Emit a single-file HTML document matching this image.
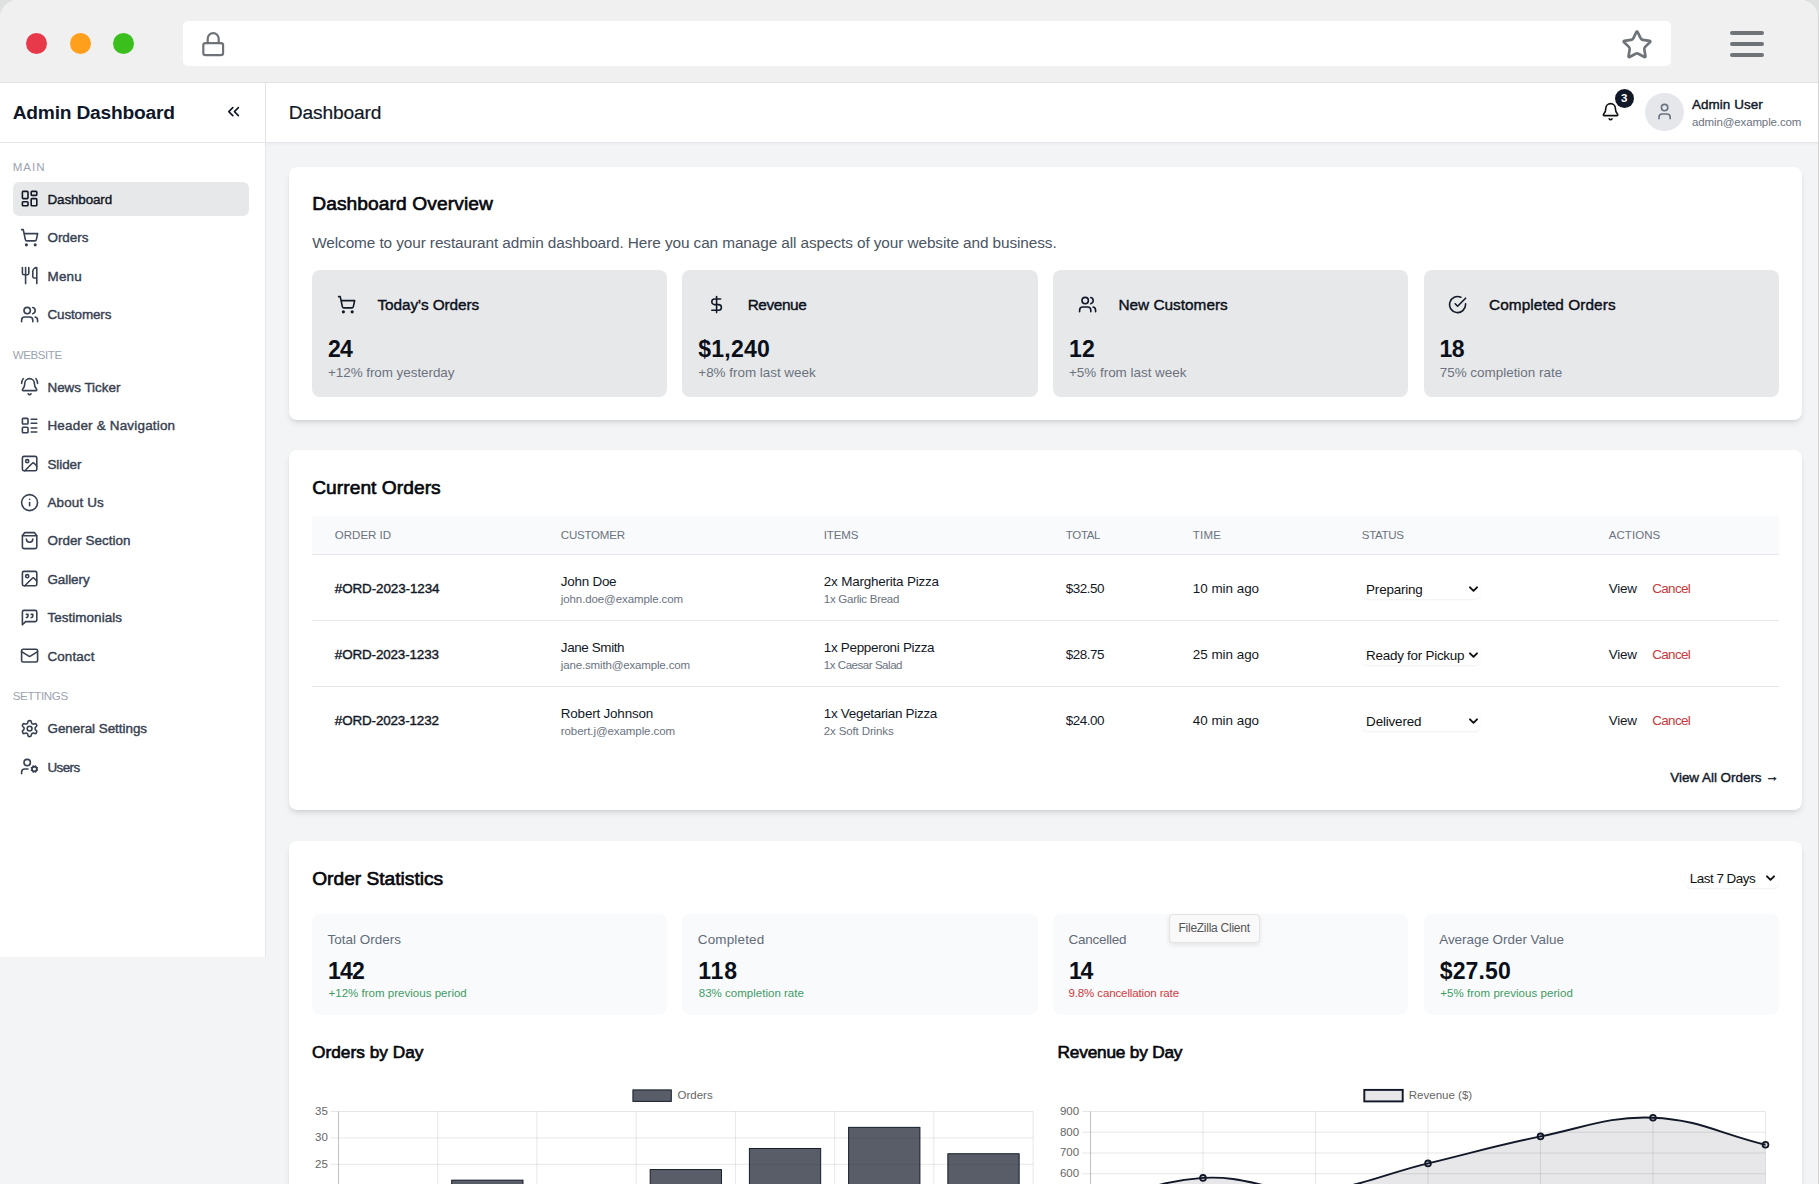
<!DOCTYPE html>
<html lang="en"><head><meta charset="utf-8"><title>Admin Dashboard</title>
<style>
*{box-sizing:border-box;margin:0;padding:0}
html,body{width:1819px;height:1184px;overflow:hidden}
body{position:relative;background:#dfe0e0;font-family:"Liberation Sans",sans-serif;color:#111827;-webkit-font-smoothing:antialiased}
.abs{position:absolute}
svg.ic{display:block;flex:none}
.sb{-webkit-text-stroke:.4px currentColor}
.card h2 .sb,.card h3 .sb{-webkit-text-stroke:.65px currentColor}
.item span{position:relative;top:.5px}
.page{position:absolute;left:0;top:0;width:1818px;height:1184px;background:#f3f4f6;border-radius:18px 18px 0 0;overflow:hidden}
.edge{position:absolute;left:1818px;top:14px;width:1px;height:1170px;background:#d4d4d4}
/* browser chrome */
.chrome{position:absolute;left:0;top:0;width:1818px;height:83px;background:#f0f0f0;border-bottom:1px solid #e1e1e1}
.dot{position:absolute;top:32.5px;width:21px;height:21px;border-radius:50%}
.url{position:absolute;left:183px;top:21px;width:1488px;height:45px;background:#fff;border-radius:5px}
.chrome .ic{position:absolute;color:#6e7377}
.hb{position:absolute;left:1730.2px;width:33.8px;height:4.2px;border-radius:2.1px;background:#6e7377}
/* sidebar */
.sidebar{position:absolute;left:0;top:83px;width:266px;height:873.5px;background:#fff;border-right:1px solid #e5e7eb}
.sbhead{position:relative;height:60.4px;border-bottom:1px solid #e5e7eb}
.brand{position:absolute;left:12.7px;top:15.7px;font-size:19.2px;line-height:27px;font-weight:700;color:#0f172a;white-space:nowrap}
.collapse{position:absolute;left:224.4px;top:19.3px;color:#111827}
nav{padding:15.5px 16px 0 12.7px}
.lab{position:relative;top:.8px;font-size:11.52px;line-height:15.36px;color:#9ca3af;text-transform:uppercase;white-space:nowrap;margin:15.5px 0 7.5px}
.lab.first{margin-top:0}
.item{display:flex;align-items:center;height:34.56px;margin-bottom:3.84px;padding-left:7.3px;border-radius:6px;color:#374151;font-size:13.44px;line-height:19.2px;white-space:nowrap;width:236.3px}
.item .ic{margin-right:8.3px}
.item.active{background:#e7e8e9;color:#111827}
/* header */
.top{position:absolute;left:266px;top:83px;width:1560px;height:60.4px;background:#fff;border-bottom:1px solid #e5e7eb;box-shadow:0 1px 2px rgba(0,0,0,.05)}
.top h1{position:absolute;left:22.8px;top:15.5px;font-size:19.2px;line-height:27px;font-weight:400;color:#111827;white-space:nowrap;-webkit-text-stroke:.2px currentColor}
.bell{position:absolute;left:1335.3px;top:19.3px;color:#111}
.badge{position:absolute;left:1348.7px;top:5.5px;width:19.2px;height:19.2px;border-radius:50%;background:#111827;color:#fff;font-size:11.5px;line-height:19.2px;font-weight:700;text-align:center}
.avatar{position:absolute;left:1379.3px;top:9.6px;width:38.4px;height:38.4px;border-radius:50%;background:#e5e7eb;color:#6b7280;display:flex;align-items:center;justify-content:center}
.uname{position:absolute;left:1426px;top:11.6px;font-size:13.44px;line-height:19.2px;color:#111827;white-space:nowrap}
.umail{position:absolute;left:1426px;top:31.8px;font-size:11.52px;line-height:15.36px;color:#6b7280;white-space:nowrap}
/* cards */
.card{position:absolute;left:289px;width:1513px;background:#fff;border-radius:8px;box-shadow:0 4px 6px -1px rgba(0,0,0,.1),0 2px 4px -2px rgba(0,0,0,.1)}
.card h2{position:absolute;left:23.2px;font-size:19.2px;line-height:27px;font-weight:400;color:#05070d;white-space:nowrap}
.card h3{position:absolute;font-size:17.28px;line-height:27px;font-weight:400;color:#05070d;white-space:nowrap}
.t{position:absolute;white-space:nowrap}
.stat{position:absolute;width:355.3px;border-radius:8px}
.ov{top:103.5px;height:126.5px;background:#e7e8e9}
.ov .ic{position:absolute;top:25.3px;left:24.7px;color:#111827}
.ov .ttl{position:absolute;left:65.4px;top:25px;font-size:15.36px;line-height:20px;color:#0b0f19;white-space:nowrap}
.ov .num{position:absolute;left:15.9px;top:63.6px;font-size:23.04px;line-height:30.72px;font-weight:700;color:#0b0f19;white-space:nowrap}
.ov .sub{position:absolute;left:16px;top:93px;font-size:13.44px;line-height:19.2px;color:#6b7280;white-space:nowrap}
.os{top:73px;height:101px;background:#f9fafb}
.os .ttl{position:absolute;left:15.5px;top:15.5px;font-size:13.44px;line-height:19.2px;color:#626a79;white-space:nowrap}
.os .num{position:absolute;left:16px;top:41.5px;font-size:23.04px;line-height:30.72px;font-weight:700;color:#0b0f19;white-space:nowrap}
.os .sub{position:absolute;left:16.5px;top:72.3px;font-size:11.52px;line-height:15.36px;white-space:nowrap}
.green{color:#3f9a63}.red{color:#d0393e;margin-left:-1px}
/* table */
table{position:absolute;left:23px;top:65.5px;width:1467px;border-collapse:collapse;table-layout:fixed}
th{height:38.5px;background:#f9fafb;text-align:left;padding:0 0 0 22.8px;font-size:11.52px;font-weight:400;color:#6b7280;text-transform:uppercase;white-space:nowrap;border-bottom:1px solid #e5e7eb}
td{height:66px;padding:2.8px 0 0 22.8px;font-size:13.44px;line-height:19.2px;color:#111827;white-space:nowrap;vertical-align:middle;border-bottom:1px solid #e5e7eb}
tr:last-child td{border-bottom:none}
td .s{display:block;position:relative;top:1px;font-size:11.52px;line-height:15.36px;color:#6b7280;margin-top:.6px}
td .m{display:block;position:relative;top:.7px}
.sel{position:relative;display:block;background:#fff;border-radius:5px;box-shadow:0 1px 2px rgba(0,0,0,.06);font-size:13.44px;line-height:21.8px;height:19.8px;padding-left:4.3px;color:#111;white-space:nowrap}
.sel svg{position:absolute;right:2.2px;top:6.2px}
.cancel{color:#c8383d;margin-left:15.5px}
.arr{position:relative;top:-1px}
.tip{position:absolute;left:1169.3px;top:913.5px;width:91px;height:29.4px;background:#f9f9f9;border:1px solid #e4e4e4;border-radius:4px;box-shadow:0 2px 5px rgba(0,0,0,.09);font-size:12px;line-height:27.4px;color:#575757;padding-left:8.2px;white-space:nowrap}
</style></head>
<body>
<div class="page">

<div class="chrome">
  <div class="dot" style="left:26px;background:#e8394a"></div>
  <div class="dot" style="left:69.5px;background:#ff9f1c"></div>
  <div class="dot" style="left:113px;background:#3abf1d"></div>
  <div class="url"></div>
  <svg class="ic " width="26.4" height="26.4" viewBox="0 0 24 24" fill="none" stroke="currentColor" stroke-width="2" stroke-linecap="round" stroke-linejoin="round" style="left:199.8px;top:30.9px"><rect width="18" height="11" x="3" y="11" rx="2" ry="2"/><path d="M7 11V7a5 5 0 0 1 10 0v4"/></svg>
  <svg class="ic " width="32" height="32" viewBox="0 0 24 24" fill="none" stroke="currentColor" stroke-width="2" stroke-linecap="round" stroke-linejoin="round" style="left:1620.5px;top:28.7px"><path d="M11.525 2.295a.53.53 0 0 1 .95 0l2.31 4.679a2.123 2.123 0 0 0 1.595 1.16l5.166.756a.53.53 0 0 1 .294.904l-3.736 3.638a2.123 2.123 0 0 0-.611 1.878l.882 5.14a.53.53 0 0 1-.771.56l-4.618-2.428a2.122 2.122 0 0 0-1.973 0L6.396 21.01a.53.53 0 0 1-.77-.56l.881-5.139a2.122 2.122 0 0 0-.611-1.879L2.16 9.795a.53.53 0 0 1 .294-.906l5.165-.755a2.122 2.122 0 0 0 1.597-1.16z"/></svg>
  <div class="hb" style="top:30.7px"></div><div class="hb" style="top:41.7px"></div><div class="hb" style="top:52.8px"></div>
</div>

<aside class="sidebar">
  <div class="sbhead"><div class="brand"><span style="letter-spacing:-0.211px">Admin Dashboard</span></div><div class="collapse"><svg class="ic " width="19.2" height="19.2" viewBox="0 0 24 24" fill="none" stroke="currentColor" stroke-width="2" stroke-linecap="round" stroke-linejoin="round" ><path d="m11 17-5-5 5-5"/><path d="m18 17-5-5 5-5"/></svg></div></div>
  <nav>
<div class="lab first"><span style="letter-spacing:1.068px">MAIN</span></div>
<a class="item active"><svg class="ic " width="19.2" height="19.2" viewBox="0 0 24 24" fill="none" stroke="currentColor" stroke-width="2" stroke-linecap="round" stroke-linejoin="round" ><rect width="7" height="9" x="3" y="3" rx="1"/><rect width="7" height="5" x="14" y="3" rx="1"/><rect width="7" height="9" x="14" y="12" rx="1"/><rect width="7" height="5" x="3" y="16" rx="1"/></svg><span class="sb" style="letter-spacing:-0.131px">Dashboard</span></a>
<a class="item"><svg class="ic " width="19.2" height="19.2" viewBox="0 0 24 24" fill="none" stroke="currentColor" stroke-width="2" stroke-linecap="round" stroke-linejoin="round" ><circle cx="8" cy="21" r="1"/><circle cx="19" cy="21" r="1"/><path d="M2.05 2.05h2l2.66 12.42a2 2 0 0 0 2 1.58h9.78a2 2 0 0 0 1.95-1.57l1.65-7.43H5.12"/></svg><span class="sb" style="letter-spacing:-0.016px">Orders</span></a>
<a class="item"><svg class="ic " width="19.2" height="19.2" viewBox="0 0 24 24" fill="none" stroke="currentColor" stroke-width="2" stroke-linecap="round" stroke-linejoin="round" ><path d="M3 2v7c0 1.1.9 2 2 2h4a2 2 0 0 0 2-2V2"/><path d="M7 2v20"/><path d="M21 15V2a5 5 0 0 0-5 5v6c0 1.1.9 2 2 2h3Zm0 0v7"/></svg><span class="sb" style="letter-spacing:0.225px">Menu</span></a>
<a class="item"><svg class="ic " width="19.2" height="19.2" viewBox="0 0 24 24" fill="none" stroke="currentColor" stroke-width="2" stroke-linecap="round" stroke-linejoin="round" ><path d="M16 21v-2a4 4 0 0 0-4-4H6a4 4 0 0 0-4 4v2"/><circle cx="9" cy="7" r="4"/><path d="M22 21v-2a4 4 0 0 0-3-3.87"/><path d="M16 3.13a4 4 0 0 1 0 7.75"/></svg><span class="sb" style="letter-spacing:-0.134px">Customers</span></a>
<div class="lab"><span style="letter-spacing:-0.388px">WEBSITE</span></div>
<a class="item"><svg class="ic " width="19.2" height="19.2" viewBox="0 0 24 24" fill="none" stroke="currentColor" stroke-width="2" stroke-linecap="round" stroke-linejoin="round" ><path d="M10.268 21a2 2 0 0 0 3.464 0"/><path d="M22 8c0-2.3-.8-4.3-2-6"/><path d="M3.262 15.326A1 1 0 0 0 4 17h16a1 1 0 0 0 .74-1.673C19.41 13.956 18 12.499 18 8A6 6 0 0 0 6 8c0 4.499-1.411 5.956-2.738 7.326"/><path d="M4 2C2.8 3.7 2 5.7 2 8"/></svg><span class="sb" style="letter-spacing:-0.027px">News Ticker</span></a>
<a class="item"><svg class="ic " width="19.2" height="19.2" viewBox="0 0 24 24" fill="none" stroke="currentColor" stroke-width="2" stroke-linecap="round" stroke-linejoin="round" ><rect width="7" height="7" x="3" y="3" rx="1"/><rect width="7" height="7" x="3" y="14" rx="1"/><path d="M14 4h7"/><path d="M14 9h7"/><path d="M14 15h7"/><path d="M14 20h7"/></svg><span class="sb" style="letter-spacing:0.200px">Header &amp; Navigation</span></a>
<a class="item"><svg class="ic " width="19.2" height="19.2" viewBox="0 0 24 24" fill="none" stroke="currentColor" stroke-width="2" stroke-linecap="round" stroke-linejoin="round" ><rect width="18" height="18" x="3" y="3" rx="2" ry="2"/><circle cx="9" cy="9" r="2"/><path d="m21 15-3.086-3.086a2 2 0 0 0-2.828 0L6 21"/></svg><span class="sb" style="letter-spacing:-0.072px">Slider</span></a>
<a class="item"><svg class="ic " width="19.2" height="19.2" viewBox="0 0 24 24" fill="none" stroke="currentColor" stroke-width="2" stroke-linecap="round" stroke-linejoin="round" ><circle cx="12" cy="12" r="10"/><path d="M12 16v-4"/><path d="M12 8h.01"/></svg><span class="sb" style="letter-spacing:0.146px">About Us</span></a>
<a class="item"><svg class="ic " width="19.2" height="19.2" viewBox="0 0 24 24" fill="none" stroke="currentColor" stroke-width="2" stroke-linecap="round" stroke-linejoin="round" ><path d="M6 2 3 6v14a2 2 0 0 0 2 2h14a2 2 0 0 0 2-2V6l-3-4Z"/><path d="M3 6h18"/><path d="M16 10a4 4 0 0 1-8 0"/></svg><span class="sb" style="letter-spacing:0.008px">Order Section</span></a>
<a class="item"><svg class="ic " width="19.2" height="19.2" viewBox="0 0 24 24" fill="none" stroke="currentColor" stroke-width="2" stroke-linecap="round" stroke-linejoin="round" ><rect width="18" height="18" x="3" y="3" rx="2" ry="2"/><circle cx="9" cy="9" r="2"/><path d="m21 15-3.086-3.086a2 2 0 0 0-2.828 0L6 21"/></svg><span class="sb" style="letter-spacing:-0.063px">Gallery</span></a>
<a class="item"><svg class="ic " width="19.2" height="19.2" viewBox="0 0 24 24" fill="none" stroke="currentColor" stroke-width="2" stroke-linecap="round" stroke-linejoin="round" ><path d="M21 15a2 2 0 0 1-2 2H7l-4 4V5a2 2 0 0 1 2-2h14a2 2 0 0 1 2 2z"/><path d="M8 12a2 2 0 0 0 2-2V8H8"/><path d="M14 12a2 2 0 0 0 2-2V8h-2"/></svg><span class="sb" style="letter-spacing:0.051px">Testimonials</span></a>
<a class="item"><svg class="ic " width="19.2" height="19.2" viewBox="0 0 24 24" fill="none" stroke="currentColor" stroke-width="2" stroke-linecap="round" stroke-linejoin="round" ><rect width="20" height="16" x="2" y="4" rx="2"/><path d="m22 7-8.97 5.7a1.94 1.94 0 0 1-2.06 0L2 7"/></svg><span class="sb" style="letter-spacing:0.098px">Contact</span></a>
<div class="lab"><span style="letter-spacing:-0.299px">SETTINGS</span></div>
<a class="item"><svg class="ic " width="19.2" height="19.2" viewBox="0 0 24 24" fill="none" stroke="currentColor" stroke-width="2" stroke-linecap="round" stroke-linejoin="round" ><path d="M12.22 2h-.44a2 2 0 0 0-2 2v.18a2 2 0 0 1-1 1.73l-.43.25a2 2 0 0 1-2 0l-.15-.08a2 2 0 0 0-2.73.73l-.22.38a2 2 0 0 0 .73 2.73l.15.1a2 2 0 0 1 1 1.72v.51a2 2 0 0 1-1 1.74l-.15.09a2 2 0 0 0-.73 2.73l.22.38a2 2 0 0 0 2.73.73l.15-.08a2 2 0 0 1 2 0l.43.25a2 2 0 0 1 1 1.73V20a2 2 0 0 0 2 2h.44a2 2 0 0 0 2-2v-.18a2 2 0 0 1 1-1.73l.43-.25a2 2 0 0 1 2 0l.15.08a2 2 0 0 0 2.73-.73l.22-.39a2 2 0 0 0-.73-2.73l-.15-.08a2 2 0 0 1-1-1.74v-.5a2 2 0 0 1 1-1.74l.15-.09a2 2 0 0 0 .73-2.73l-.22-.38a2 2 0 0 0-2.73-.73l-.15.08a2 2 0 0 1-2 0l-.43-.25a2 2 0 0 1-1-1.73V4a2 2 0 0 0-2-2z"/><circle cx="12" cy="12" r="3"/></svg><span class="sb" style="letter-spacing:-0.033px">General Settings</span></a>
<a class="item"><svg class="ic " width="19.2" height="19.2" viewBox="0 0 24 24" fill="none" stroke="currentColor" stroke-width="2" stroke-linecap="round" stroke-linejoin="round" ><circle cx="18" cy="15" r="3"/><circle cx="9" cy="7" r="4"/><path d="M10 15H6a4 4 0 0 0-4 4v2"/><path d="m21.7 16.4-.9-.3"/><path d="m15.2 13.9-.9-.3"/><path d="m16.6 18.7.3-.9"/><path d="m19.1 12.2.3-.9"/><path d="m19.6 18.7-.4-1"/><path d="m16.8 12.3-.4-1"/><path d="m14.3 16.6 1-.4"/><path d="m20.7 13.8 1-.4"/></svg><span class="sb" style="letter-spacing:-0.598px">Users</span></a>
  </nav>
</aside>

<header class="top">
  <h1><span style="letter-spacing:-0.159px">Dashboard</span></h1>
  <div class="bell"><svg class="ic " width="19.2" height="19.2" viewBox="0 0 24 24" fill="none" stroke="currentColor" stroke-width="2" stroke-linecap="round" stroke-linejoin="round" ><path d="M10.268 21a2 2 0 0 0 3.464 0"/><path d="M3.262 15.326A1 1 0 0 0 4 17h16a1 1 0 0 0 .74-1.673C19.41 13.956 18 12.499 18 8A6 6 0 0 0 6 8c0 4.499-1.411 5.956-2.738 7.326"/></svg></div>
  <div class="badge">3</div>
  <div class="avatar"><svg class="ic " width="19.2" height="19.2" viewBox="0 0 24 24" fill="none" stroke="currentColor" stroke-width="2" stroke-linecap="round" stroke-linejoin="round" ><path d="M19 21v-2a4 4 0 0 0-4-4H9a4 4 0 0 0-4 4v2"/><circle cx="12" cy="7" r="4"/></svg></div>
  <div class="uname"><span class="sb" style="letter-spacing:0.055px">Admin User</span></div>
  <div class="umail"><span style="letter-spacing:-0.134px">admin@example.com</span></div>
</header>
<main>

<section class="card" style="top:166.5px;height:253.2px">
  <h2 style="top:23.3px"><span class="sb" style="letter-spacing:0.090px">Dashboard Overview</span></h2>
  <p class="t" style="left:23.2px;top:64.8px;font-size:15.36px;line-height:23px;color:#4b5563"><span style="letter-spacing:-0.096px">Welcome to your restaurant admin dashboard. Here you can manage all aspects of your website and business.</span></p>
<div class="stat ov" style="left:23px"><svg class="ic " width="19.2" height="19.2" viewBox="0 0 24 24" fill="none" stroke="currentColor" stroke-width="2" stroke-linecap="round" stroke-linejoin="round" ><circle cx="8" cy="21" r="1"/><circle cx="19" cy="21" r="1"/><path d="M2.05 2.05h2l2.66 12.42a2 2 0 0 0 2 1.58h9.78a2 2 0 0 0 1.95-1.57l1.65-7.43H5.12"/></svg><div class="ttl"><span class="sb" style="letter-spacing:-0.070px">Today's Orders</span></div><div class="num"><span style="letter-spacing:-0.625px">24</span></div><div class="sub"><span style="letter-spacing:-0.047px">+12% from yesterday</span></div></div>
<div class="stat ov" style="left:393.3px"><svg class="ic " width="19.2" height="19.2" viewBox="0 0 24 24" fill="none" stroke="currentColor" stroke-width="2" stroke-linecap="round" stroke-linejoin="round" ><line x1="12" x2="12" y1="2" y2="22"/><path d="M17 5H9.5a3.5 3.5 0 0 0 0 7h5a3.5 3.5 0 0 1 0 7H6"/></svg><div class="ttl"><span class="sb" style="letter-spacing:-0.414px">Revenue</span></div><div class="num"><span style="letter-spacing:0.249px">$1,240</span></div><div class="sub"><span style="letter-spacing:-0.013px">+8% from last week</span></div></div>
<div class="stat ov" style="left:764px"><svg class="ic " width="19.2" height="19.2" viewBox="0 0 24 24" fill="none" stroke="currentColor" stroke-width="2" stroke-linecap="round" stroke-linejoin="round" ><path d="M16 21v-2a4 4 0 0 0-4-4H6a4 4 0 0 0-4 4v2"/><circle cx="9" cy="7" r="4"/><path d="M22 21v-2a4 4 0 0 0-3-3.87"/><path d="M16 3.13a4 4 0 0 1 0 7.75"/></svg><div class="ttl"><span class="sb" style="letter-spacing:0.013px">New Customers</span></div><div class="num"><span style="letter-spacing:0.375px">12</span></div><div class="sub"><span style="letter-spacing:-0.013px">+5% from last week</span></div></div>
<div class="stat ov" style="left:1134.7px"><svg class="ic " width="19.2" height="19.2" viewBox="0 0 24 24" fill="none" stroke="currentColor" stroke-width="2" stroke-linecap="round" stroke-linejoin="round" ><path d="M22 11.08V12a10 10 0 1 1-5.93-9.14"/><path d="m9 11 3 3L22 4"/></svg><div class="ttl"><span class="sb" style="letter-spacing:0.067px">Completed Orders</span></div><div class="num"><span style="letter-spacing:-0.725px">18</span></div><div class="sub"><span style="letter-spacing:0.000px">75% completion rate</span></div></div>
</section>

<section class="card" style="top:450.4px;height:359.8px">
  <h2 style="top:23.7px"><span class="sb" style="letter-spacing:0.042px">Current Orders</span></h2>
  <table><thead><tr><th style="width:226px"><span style="letter-spacing:-0.002px">Order ID</span></th><th style="width:263px"><span style="letter-spacing:-0.212px">Customer</span></th><th style="width:242px"><span style="letter-spacing:-0.126px">Items</span></th><th style="width:127px"><span style="letter-spacing:-0.341px">Total</span></th><th style="width:169px"><span style="letter-spacing:0.195px">Time</span></th><th style="width:247px"><span style="letter-spacing:-0.324px">Status</span></th><th style="width:193px"><span style="letter-spacing:0.035px">Actions</span></th></tr></thead><tbody>
<tr><td><span class="sb" style="letter-spacing:-0.106px">#ORD-2023-1234</span></td><td><span class="m" style="letter-spacing:-0.247px">John Doe</span><span class="s" style="letter-spacing:-0.108px">john.doe@example.com</span></td><td><span class="m" style="letter-spacing:-0.197px">2x Margherita Pizza</span><span class="s" style="letter-spacing:-0.270px">1x Garlic Bread</span></td><td><span style="letter-spacing:-0.482px">$32.50</span></td><td><span style="letter-spacing:-0.022px">10 min ago</span></td><td><div class="sel" style="width:118.7px;margin-left:-22.5px;left:22.5px"><span style="letter-spacing:-0.196px">Preparing</span><svg width="9" height="9" viewBox="0 0 9 9" fill="none" stroke="#111" stroke-width="1.9" stroke-linecap="round" stroke-linejoin="round"><path d="M1 2.3 4.5 5.8 8 2.3"/></svg></div></td><td><span style="letter-spacing:-0.264px">View</span><span class="cancel" style="letter-spacing:-0.629px">Cancel</span></td></tr>
<tr><td><span class="sb" style="letter-spacing:-0.144px">#ORD-2023-1233</span></td><td><span class="m" style="letter-spacing:-0.382px">Jane Smith</span><span class="s" style="letter-spacing:-0.160px">jane.smith@example.com</span></td><td><span class="m" style="letter-spacing:-0.293px">1x Pepperoni Pizza</span><span class="s" style="letter-spacing:-0.460px">1x Caesar Salad</span></td><td><span style="letter-spacing:-0.482px">$28.75</span></td><td><span style="letter-spacing:-0.022px">25 min ago</span></td><td><div class="sel" style="width:118.7px;margin-left:-22.5px;left:22.5px"><span style="letter-spacing:-0.262px">Ready for Pickup</span><svg width="9" height="9" viewBox="0 0 9 9" fill="none" stroke="#111" stroke-width="1.9" stroke-linecap="round" stroke-linejoin="round"><path d="M1 2.3 4.5 5.8 8 2.3"/></svg></div></td><td><span style="letter-spacing:-0.264px">View</span><span class="cancel" style="letter-spacing:-0.629px">Cancel</span></td></tr>
<tr><td><span class="sb" style="letter-spacing:-0.144px">#ORD-2023-1232</span></td><td><span class="m" style="letter-spacing:-0.190px">Robert Johnson</span><span class="s" style="letter-spacing:-0.090px">robert.j@example.com</span></td><td><span class="m" style="letter-spacing:-0.293px">1x Vegetarian Pizza</span><span class="s" style="letter-spacing:-0.137px">2x Soft Drinks</span></td><td><span style="letter-spacing:-0.482px">$24.00</span></td><td><span style="letter-spacing:-0.022px">40 min ago</span></td><td><div class="sel" style="width:118.7px;margin-left:-22.5px;left:22.5px"><span style="letter-spacing:-0.171px">Delivered</span><svg width="9" height="9" viewBox="0 0 9 9" fill="none" stroke="#111" stroke-width="1.9" stroke-linecap="round" stroke-linejoin="round"><path d="M1 2.3 4.5 5.8 8 2.3"/></svg></div></td><td><span style="letter-spacing:-0.264px">View</span><span class="cancel" style="letter-spacing:-0.629px">Cancel</span></td></tr>
</tbody></table>
  <div class="t" style="right:23.3px;top:318px;font-size:13.44px;line-height:19.2px;color:#111827"><span class="sb" style="letter-spacing:-0.018px">View All Orders <span class="arr">→</span></span></div>
</section>

<section class="card" style="top:841px;height:720px">
  <h2 style="top:23.5px"><span class="sb" style="letter-spacing:-0.010px">Order Statistics</span></h2>
  <div class="sel abs" style="left:1397px;top:28px;width:93px;height:19px;line-height:19px;padding-left:3.7px"><span style="letter-spacing:-0.487px">Last 7 Days</span><svg style="right:3.6px;top:4.6px" width="9" height="9" viewBox="0 0 9 9" fill="none" stroke="#111" stroke-width="1.9" stroke-linecap="round" stroke-linejoin="round"><path d="M1 2.3 4.5 5.8 8 2.3"/></svg></div>
<div class="stat os" style="left:23px"><div class="ttl"><span style="letter-spacing:0.037px">Total Orders</span></div><div class="num"><span style="letter-spacing:-0.819px">142</span></div><div class="sub green"><span style="letter-spacing:0.014px">+12% from previous period</span></div></div>
<div class="stat os" style="left:393.3px"><div class="ttl"><span style="letter-spacing:0.177px">Completed</span></div><div class="num"><span style="letter-spacing:0.772px">118</span></div><div class="sub green"><span style="letter-spacing:0.006px">83% completion rate</span></div></div>
<div class="stat os" style="left:764px"><div class="ttl"><span style="letter-spacing:-0.208px">Cancelled</span></div><div class="num"><span style="letter-spacing:-1.225px">14</span></div><div class="sub red"><span style="letter-spacing:-0.129px">9.8% cancellation rate</span></div></div>
<div class="stat os" style="left:1134.7px"><div class="ttl"><span style="letter-spacing:-0.017px">Average Order Value</span></div><div class="num"><span style="letter-spacing:0.129px">$27.50</span></div><div class="sub green"><span style="letter-spacing:0.046px">+5% from previous period</span></div></div>
  <h3 style="left:23px;top:198.1px"><span class="sb" style="letter-spacing:0.016px">Orders by Day</span></h3>
  <h3 style="left:768.6px;top:198.1px"><span class="sb" style="letter-spacing:-0.212px">Revenue by Day</span></h3>
  <svg class="abs" style="left:0;top:0" width="1513" height="720" viewBox="0 0 1513 720" font-family="Liberation Sans, sans-serif">
  <line x1="41.5" x2="744.11" y1="270.5" y2="270.5" stroke="rgba(0,0,0,0.1)" stroke-width="0.96"/><text x="38.8" y="273.7" text-anchor="end" font-size="11.52" fill="#666">35</text><line x1="41.5" x2="744.11" y1="296.9" y2="296.9" stroke="rgba(0,0,0,0.1)" stroke-width="0.96"/><text x="38.8" y="300.1" text-anchor="end" font-size="11.52" fill="#666">30</text><line x1="41.5" x2="744.11" y1="323.3" y2="323.3" stroke="rgba(0,0,0,0.1)" stroke-width="0.96"/><text x="38.8" y="326.5" text-anchor="end" font-size="11.52" fill="#666">25</text><line x1="41.5" x2="744.11" y1="349.7" y2="349.7" stroke="rgba(0,0,0,0.1)" stroke-width="0.96"/><text x="38.8" y="352.9" text-anchor="end" font-size="11.52" fill="#666">20</text><line x1="41.5" x2="744.11" y1="376.1" y2="376.1" stroke="rgba(0,0,0,0.1)" stroke-width="0.96"/><text x="38.8" y="379.3" text-anchor="end" font-size="11.52" fill="#666">15</text><line x1="41.5" x2="744.11" y1="402.5" y2="402.5" stroke="rgba(0,0,0,0.1)" stroke-width="0.96"/><text x="38.8" y="405.7" text-anchor="end" font-size="11.52" fill="#666">10</text><line x1="41.5" x2="744.11" y1="428.9" y2="428.9" stroke="rgba(0,0,0,0.1)" stroke-width="0.96"/><text x="38.8" y="432.1" text-anchor="end" font-size="11.52" fill="#666">5</text><line x1="41.5" x2="744.11" y1="455.3" y2="455.3" stroke="rgba(0,0,0,0.1)" stroke-width="0.96"/><text x="38.8" y="458.5" text-anchor="end" font-size="11.52" fill="#666">0</text><line x1="49.5" x2="49.5" y1="270.5" y2="463.3" stroke="rgba(0,0,0,0.25)" stroke-width="0.96"/><line x1="148.73" x2="148.73" y1="270.5" y2="463.3" stroke="rgba(0,0,0,0.1)" stroke-width="0.96"/><line x1="247.96" x2="247.96" y1="270.5" y2="463.3" stroke="rgba(0,0,0,0.1)" stroke-width="0.96"/><line x1="347.19" x2="347.19" y1="270.5" y2="463.3" stroke="rgba(0,0,0,0.1)" stroke-width="0.96"/><line x1="446.42" x2="446.42" y1="270.5" y2="463.3" stroke="rgba(0,0,0,0.1)" stroke-width="0.96"/><line x1="545.65" x2="545.65" y1="270.5" y2="463.3" stroke="rgba(0,0,0,0.1)" stroke-width="0.96"/><line x1="644.88" x2="644.88" y1="270.5" y2="463.3" stroke="rgba(0,0,0,0.1)" stroke-width="0.96"/><line x1="744.11" x2="744.11" y1="270.5" y2="463.3" stroke="rgba(0,0,0,0.1)" stroke-width="0.96"/><rect x="63.47" y="360.26" width="71.3" height="95.04" fill="rgba(17,24,39,0.7)" stroke="#111827" stroke-width="0.96"/><text x="99.12" y="475.3" text-anchor="middle" font-size="11.52" fill="#666">Mon</text><rect x="162.7" y="339.14" width="71.3" height="116.16" fill="rgba(17,24,39,0.7)" stroke="#111827" stroke-width="0.96"/><text x="198.35" y="475.3" text-anchor="middle" font-size="11.52" fill="#666">Tue</text><rect x="261.93" y="354.98" width="71.3" height="100.32" fill="rgba(17,24,39,0.7)" stroke="#111827" stroke-width="0.96"/><text x="297.58" y="475.3" text-anchor="middle" font-size="11.52" fill="#666">Wed</text><rect x="361.16" y="328.58" width="71.3" height="126.72" fill="rgba(17,24,39,0.7)" stroke="#111827" stroke-width="0.96"/><text x="396.81" y="475.3" text-anchor="middle" font-size="11.52" fill="#666">Thu</text><rect x="460.39" y="307.46" width="71.3" height="147.84" fill="rgba(17,24,39,0.7)" stroke="#111827" stroke-width="0.96"/><text x="496.04" y="475.3" text-anchor="middle" font-size="11.52" fill="#666">Fri</text><rect x="559.62" y="286.34" width="71.3" height="168.96" fill="rgba(17,24,39,0.7)" stroke="#111827" stroke-width="0.96"/><text x="595.26" y="475.3" text-anchor="middle" font-size="11.52" fill="#666">Sat</text><rect x="658.85" y="312.74" width="71.3" height="142.56" fill="rgba(17,24,39,0.7)" stroke="#111827" stroke-width="0.96"/><text x="694.5" y="475.3" text-anchor="middle" font-size="11.52" fill="#666">Sun</text><rect x="343.9" y="248.9" width="38.4" height="11.5" fill="rgba(17,24,39,0.7)" stroke="#111827" stroke-width="0.96"/><text x="388.5" y="257.6" font-size="11.52" fill="#666">Orders</text>
  <line x1="793.2" x2="1476.5" y1="270.5" y2="270.5" stroke="rgba(0,0,0,0.1)" stroke-width="0.96"/><text x="790.1" y="273.8" text-anchor="end" font-size="11.52" fill="#666">900</text><line x1="793.2" x2="1476.5" y1="291.25" y2="291.25" stroke="rgba(0,0,0,0.1)" stroke-width="0.96"/><text x="790.1" y="294.55" text-anchor="end" font-size="11.52" fill="#666">800</text><line x1="793.2" x2="1476.5" y1="312" y2="312" stroke="rgba(0,0,0,0.1)" stroke-width="0.96"/><text x="790.1" y="315.3" text-anchor="end" font-size="11.52" fill="#666">700</text><line x1="793.2" x2="1476.5" y1="332.75" y2="332.75" stroke="rgba(0,0,0,0.1)" stroke-width="0.96"/><text x="790.1" y="336.05" text-anchor="end" font-size="11.52" fill="#666">600</text><line x1="793.2" x2="1476.5" y1="353.5" y2="353.5" stroke="rgba(0,0,0,0.1)" stroke-width="0.96"/><text x="790.1" y="356.8" text-anchor="end" font-size="11.52" fill="#666">500</text><line x1="793.2" x2="1476.5" y1="374.25" y2="374.25" stroke="rgba(0,0,0,0.1)" stroke-width="0.96"/><text x="790.1" y="377.55" text-anchor="end" font-size="11.52" fill="#666">400</text><line x1="793.2" x2="1476.5" y1="395" y2="395" stroke="rgba(0,0,0,0.1)" stroke-width="0.96"/><text x="790.1" y="398.3" text-anchor="end" font-size="11.52" fill="#666">300</text><line x1="793.2" x2="1476.5" y1="415.75" y2="415.75" stroke="rgba(0,0,0,0.1)" stroke-width="0.96"/><text x="790.1" y="419.05" text-anchor="end" font-size="11.52" fill="#666">200</text><line x1="793.2" x2="1476.5" y1="436.5" y2="436.5" stroke="rgba(0,0,0,0.1)" stroke-width="0.96"/><text x="790.1" y="439.8" text-anchor="end" font-size="11.52" fill="#666">100</text><line x1="793.2" x2="1476.5" y1="457.25" y2="457.25" stroke="rgba(0,0,0,0.1)" stroke-width="0.96"/><text x="790.1" y="460.55" text-anchor="end" font-size="11.52" fill="#666">0</text><line x1="801.5" x2="801.5" y1="270.5" y2="465.25" stroke="rgba(0,0,0,0.25)" stroke-width="0.96"/><line x1="914" x2="914" y1="270.5" y2="465.25" stroke="rgba(0,0,0,0.1)" stroke-width="0.96"/><line x1="1026.5" x2="1026.5" y1="270.5" y2="465.25" stroke="rgba(0,0,0,0.1)" stroke-width="0.96"/><line x1="1139" x2="1139" y1="270.5" y2="465.25" stroke="rgba(0,0,0,0.1)" stroke-width="0.96"/><line x1="1251.5" x2="1251.5" y1="270.5" y2="465.25" stroke="rgba(0,0,0,0.1)" stroke-width="0.96"/><line x1="1364" x2="1364" y1="270.5" y2="465.25" stroke="rgba(0,0,0,0.1)" stroke-width="0.96"/><line x1="1476.5" x2="1476.5" y1="270.5" y2="465.25" stroke="rgba(0,0,0,0.1)" stroke-width="0.96"/><path d="M801.5 363.88 C846.5 353.09 868.51 339.84 914 336.9 C958.51 334.03 981.99 352.22 1026.5 349.35 C1071.99 346.41 1094 333.16 1139 322.38 C1184 311.59 1206.18 304.6 1251.5 295.4 C1296.18 286.34 1319.32 275.08 1364 276.72 C1409.32 278.4 1431.5 292.91 1476.5 303.7 L1476.5 457.25 L801.5 457.25 Z" fill="rgba(17,24,39,0.1)" stroke="none"/><path d="M801.5 363.88 C846.5 353.09 868.51 339.84 914 336.9 C958.51 334.03 981.99 352.22 1026.5 349.35 C1071.99 346.41 1094 333.16 1139 322.38 C1184 311.59 1206.18 304.6 1251.5 295.4 C1296.18 286.34 1319.32 275.08 1364 276.72 C1409.32 278.4 1431.5 292.91 1476.5 303.7" fill="none" stroke="#111827" stroke-width="1.92" stroke-linecap="butt" stroke-linejoin="miter"/><circle cx="801.5" cy="363.88" r="2.9" fill="rgba(17,24,39,0.1)" stroke="#111827" stroke-width="1.8"/><circle cx="914" cy="336.9" r="2.9" fill="rgba(17,24,39,0.1)" stroke="#111827" stroke-width="1.8"/><circle cx="1026.5" cy="349.35" r="2.9" fill="rgba(17,24,39,0.1)" stroke="#111827" stroke-width="1.8"/><circle cx="1139" cy="322.38" r="2.9" fill="rgba(17,24,39,0.1)" stroke="#111827" stroke-width="1.8"/><circle cx="1251.5" cy="295.4" r="2.9" fill="rgba(17,24,39,0.1)" stroke="#111827" stroke-width="1.8"/><circle cx="1364" cy="276.72" r="2.9" fill="rgba(17,24,39,0.1)" stroke="#111827" stroke-width="1.8"/><circle cx="1476.5" cy="303.7" r="2.9" fill="rgba(17,24,39,0.1)" stroke="#111827" stroke-width="1.8"/><rect x="1075.3" y="248.9" width="38.4" height="11.5" fill="rgba(17,24,39,0.1)" stroke="#111827" stroke-width="1.92"/><text x="1119.8" y="257.6" font-size="11.52" fill="#666">Revenue ($)</text>
  </svg>
</section>
</main>
<div class="tip"><span style="letter-spacing:-0.257px">FileZilla Client</span></div>
</div>
<div class="edge"></div>
</body></html>
